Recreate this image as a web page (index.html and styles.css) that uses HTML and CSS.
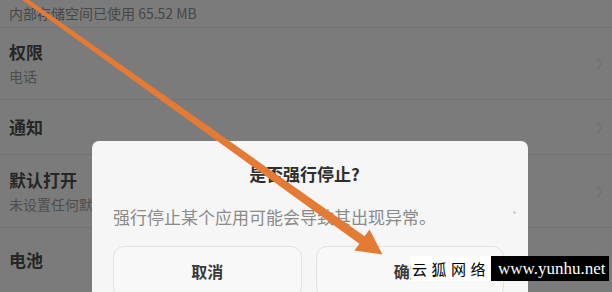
FILE: index.html
```html
<!DOCTYPE html>
<html lang="zh">
<head>
<meta charset="utf-8">
<link rel="stylesheet" href="styles.css">
</head>
<body>
<div class="screen">
  <div class="list">
    <div class="row row-top">
      <div class="sub sub-top">内部存储空间已使用 65.52 MB</div>
    </div>
    <div class="row row-two">
      <div class="texts">
        <div class="title">权限</div>
        <div class="sub">电话</div>
      </div>
      <svg class="chev" width="7" height="13" viewBox="0 0 7 13"><path d="M1 1 L6 6.5 L1 12" fill="none" stroke="#6f6f6f" stroke-width="1.2"/></svg>
    </div>
    <div class="row row-one">
      <div class="texts">
        <div class="title">通知</div>
      </div>
      <svg class="chev" width="7" height="13" viewBox="0 0 7 13"><path d="M1 1 L6 6.5 L1 12" fill="none" stroke="#6f6f6f" stroke-width="1.2"/></svg>
    </div>
    <div class="row row-two row-four">
      <div class="texts">
        <div class="title">默认打开</div>
        <div class="sub">未设置任何默认操作</div>
      </div>
      <svg class="chev" width="7" height="13" viewBox="0 0 7 13"><path d="M1 1 L6 6.5 L1 12" fill="none" stroke="#6f6f6f" stroke-width="1.2"/></svg>
    </div>
    <div class="row row-one row-last">
      <div class="texts">
        <div class="title">电池</div>
      </div>
      <svg class="chev" width="7" height="13" viewBox="0 0 7 13"><path d="M1 1 L6 6.5 L1 12" fill="none" stroke="#6f6f6f" stroke-width="1.2"/></svg>
    </div>
  </div>

  <div class="dialog">
    <div class="dlg-title">是否强行停止?</div>
    <div class="dlg-msg">强行停止某个应用可能会导致其出现异常。</div>
    <div class="dlg-buttons">
      <div class="btn">取消</div>
      <div class="btn">确定</div>
    </div>
    <span class="speck"></span>
  </div>

  <svg class="arrow" width="612" height="292" viewBox="0 0 612 292">
    <polygon fill="#e47a33" points="18.8,-2.4 21.2,-5.6 364.6,236.3 369.6,229.4 382.4,254.5 354.4,250.6 359.4,243.7"/>
  </svg>

  <div class="watermark">
    <span class="wm-cn">云狐网络</span>
    <span class="wm-en">www.yunhu.net</span>
  </div>
</div>
</body>
</html>
```

FILE: styles.css
```css
* { box-sizing: border-box; }

html, body {
  margin: 0;
  padding: 0;
}

body {
  width: 612px;
  height: 292px;
  overflow: hidden;
  background: #7b7b7b;
  font-family: "Noto Sans CJK SC", "Noto Sans", sans-serif;
}

.screen {
  position: relative;
  width: 612px;
  height: 292px;
  overflow: hidden;
}

.list {
  display: flex;
  flex-direction: column;
}

.row {
  display: flex;
  align-items: center;
  justify-content: space-between;
  padding: 0 8px 0 9px;
  border-bottom: 1px solid #727272;
}

.row-top {
  height: 28px;
  align-items: flex-start;
}

.sub-top {
  margin-top: -7px;
}

.row-two {
  height: 72px;
}

.row-one {
  height: 55px;
}

.row-four {
  height: 73px;
}

.row-last {
  height: 64px;
  border-bottom: none;
}

.texts {
  display: flex;
  flex-direction: column;
}

.title {
  font-size: 17px;
  line-height: 22px;
  font-weight: 700;
  color: #262626;
}

.sub {
  font-size: 14px;
  line-height: 20px;
  color: #4e4e4e;
  margin-top: 3px;
  white-space: nowrap;
}

.sub-top {
  color: #474747;
}

.chev {
  display: block;
  margin-right: 1px;
}

.dialog {
  position: absolute;
  left: 92px;
  top: 141px;
  width: 436px;
  height: 180px;
  background: #f6f6f6;
  border-radius: 7px 7px 0 0;
  padding: 21px 24px 0 21px;
  display: flex;
  flex-direction: column;
}

.dlg-title {
  text-align: center;
  font-size: 17px;
  line-height: 24px;
  font-weight: 700;
  color: #2e2e2e;
  padding-right: 8px;
}

.dlg-msg {
  margin-top: 20px;
  font-size: 17px;
  line-height: 22px;
  color: #8a8a8a;
  white-space: nowrap;
}

.dlg-buttons {
  margin-top: 18px;
  display: flex;
  gap: 14px;
  padding-left: 0;
}

.btn {
  width: 189px;
  height: 52px;
  border: 1px solid #e2e2e2;
  border-radius: 11px;
  background: #f8f8f8;
  font-size: 16px;
  font-weight: 700;
  color: #3a3a3a;
  display: flex;
  justify-content: center;
  padding-top: 12px;
  line-height: 24px;
}

.speck {
  position: absolute;
  left: 421px;
  top: 70px;
  width: 3px;
  height: 3px;
  border-radius: 50%;
  background: #cfcfcf;
}

.arrow {
  position: absolute;
  left: 0;
  top: 0;
  pointer-events: none;
}

.watermark {
  position: absolute;
  left: 411px;
  top: 256px;
  height: 25px;
  display: flex;
}

.wm-cn {
  width: 80px;
  height: 25px;
  background: #ffffff;
  color: #000000;
  font-size: 15px;
  letter-spacing: 4.5px;
  line-height: 25px;
  padding-left: 1px;
  white-space: nowrap;
}

.wm-en {
  width: 118px;
  height: 25px;
  background: #000000;
  color: #ffffff;
  font-family: "Liberation Serif", "Times New Roman", serif;
  font-size: 17px;
  line-height: 25px;
  padding-left: 7px;
  white-space: nowrap;
}
```
